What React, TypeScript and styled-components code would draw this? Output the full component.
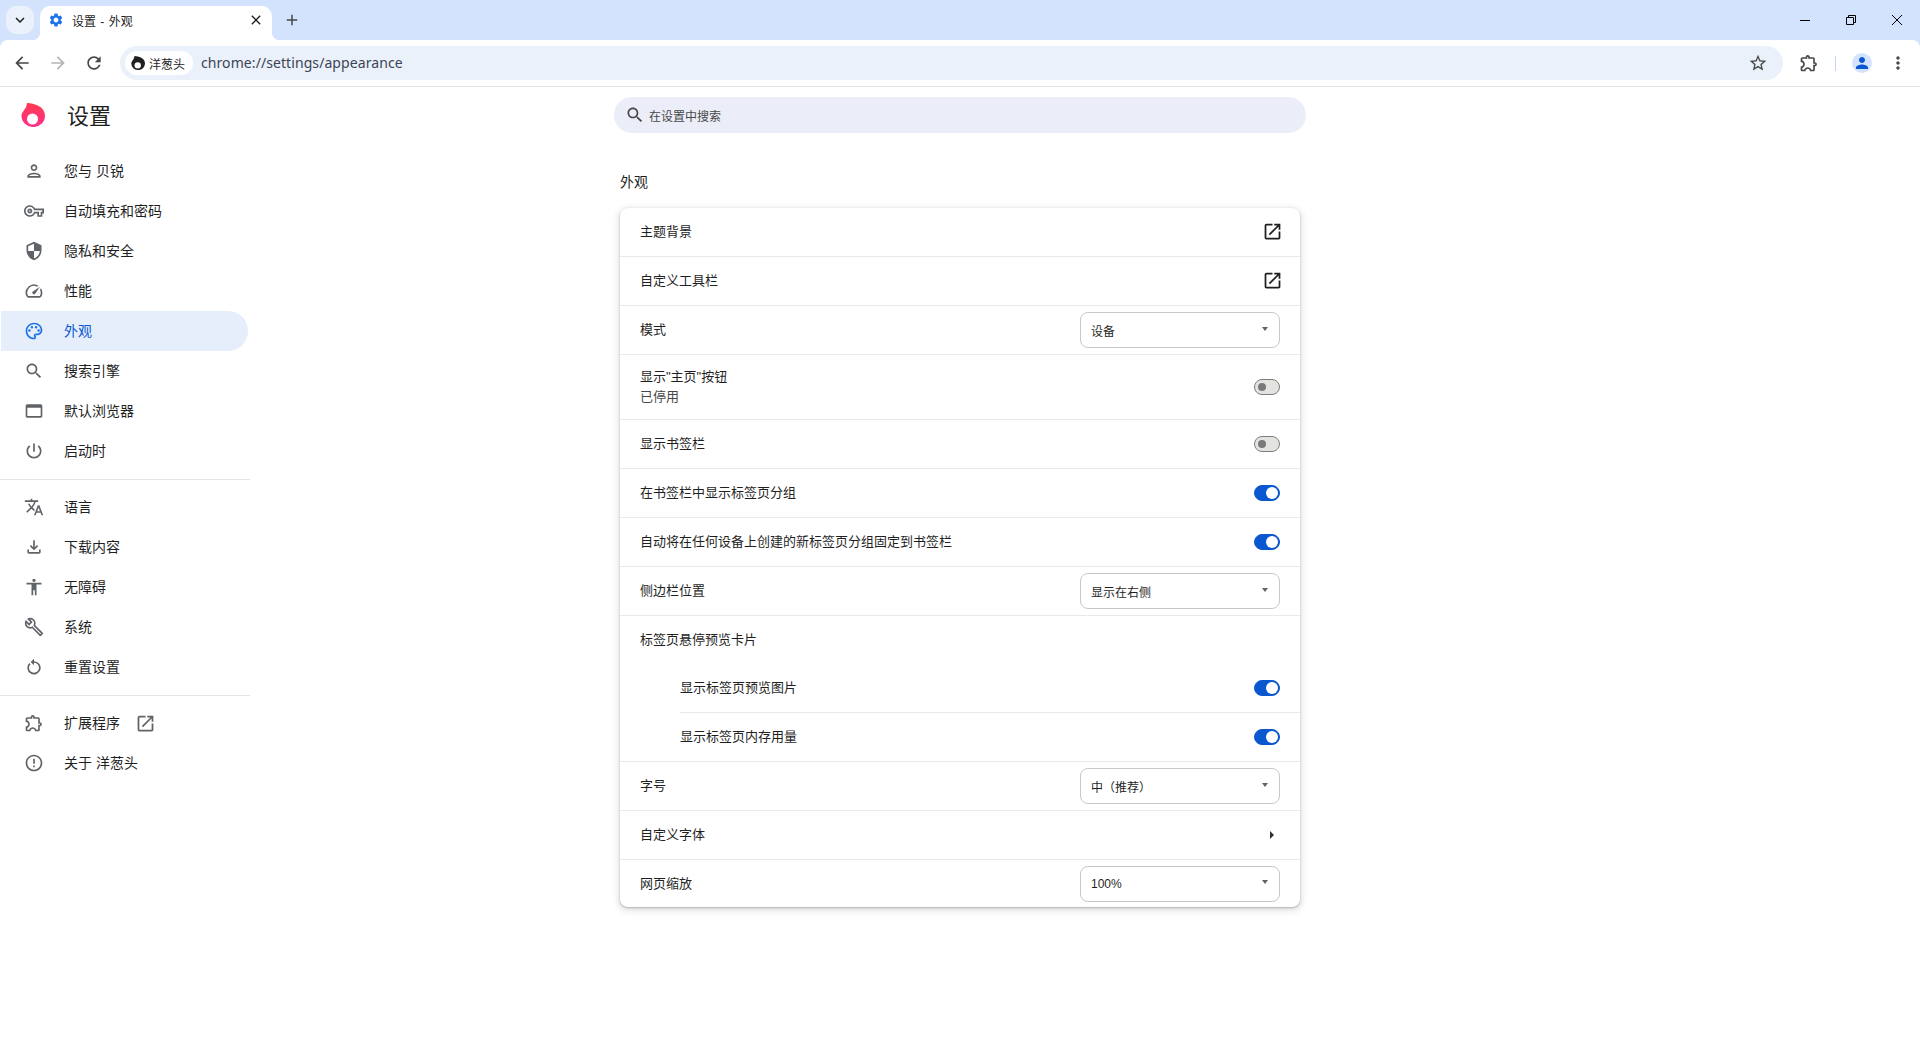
import React from "react";
import styled, { createGlobalStyle } from "styled-components";

const FONT = `"Liberation Sans", "Noto Sans CJK SC", sans-serif`;

const paths = {
  person: "M12 6c1.1 0 2 .9 2 2s-.9 2-2 2-2-.9-2-2 .9-2 2-2m0 10c2.7 0 5.8 1.29 6 2H6c.23-.72 3.31-2 6-2m0-12C9.79 4 8 5.79 8 8s1.79 4 4 4 4-1.79 4-4-1.79-4-4-4zm0 10c-2.67 0-8 1.34-8 4v2h16v-2c0-2.66-5.33-4-8-4z",
  key: "M22 19h-6v-4h-2.68c-1.14 2.42-3.6 4-6.32 4-3.86 0-7-3.14-7-7s3.14-7 7-7c2.72 0 5.17 1.58 6.32 4H24v6h-2v4zm-4-2h2v-4h2v-2H11.94l-.23-.67C11.01 8.34 9.11 7 7 7c-2.76 0-5 2.24-5 5s2.24 5 5 5c2.11 0 4.01-1.34 4.71-3.33l.23-.67H18v4zM7 15c-1.65 0-3-1.35-3-3s1.35-3 3-3 3 1.35 3 3-1.35 3-3 3zm0-4c-.55 0-1 .45-1 1s.45 1 1 1 1-.45 1-1-.45-1-1-1z",
  shield: "M12 1L3 5v6c0 5.55 3.84 10.74 9 12 5.16-1.26 9-6.45 9-12V5l-9-4zm0 10.99h7c-.53 4.12-3.28 7.79-7 8.94V12H5V6.3l7-3.11v8.8z",
  speed: "M20.38 8.57l-1.23 1.85a8 8 0 0 1-.22 7.58H5.07A8 8 0 0 1 15.58 6.85l1.85-1.23A10 10 0 0 0 3.35 19a2 2 0 0 0 1.72 1h13.85a2 2 0 0 0 1.74-1 10 10 0 0 0-.27-10.44zm-9.79 6.84a2 2 0 0 0 2.83 0l5.66-8.49-8.49 5.66a2 2 0 0 0 0 2.83z",
  palette: "M12 22C6.49 22 2 17.51 2 12S6.49 2 12 2s10 4.04 10 9c0 3.31-2.69 6-6 6h-1.77c-.28 0-.5.22-.5.5 0 .12.05.23.13.33.41.47.64 1.06.64 1.67 0 1.38-1.12 2.5-2.5 2.5zm0-18c-4.41 0-8 3.59-8 8s3.59 8 8 8c.28 0 .5-.22.5-.5 0-.16-.08-.28-.14-.35-.41-.46-.63-1.05-.63-1.65 0-1.38 1.12-2.5 2.5-2.5H16c2.21 0 4-1.79 4-4 0-3.86-3.59-7-8-7zM6.5 10a1.5 1.5 0 1 1 0 3 1.5 1.5 0 0 1 0-3zm3-4a1.5 1.5 0 1 1 0 3 1.5 1.5 0 0 1 0-3zm5 0a1.5 1.5 0 1 1 0 3 1.5 1.5 0 0 1 0-3zm3 4a1.5 1.5 0 1 1 0 3 1.5 1.5 0 0 1 0-3z",
  search: "M15.5 14h-.79l-.28-.27C15.41 12.59 16 11.11 16 9.5 16 5.91 13.09 3 9.5 3S3 5.91 3 9.5 5.91 16 9.5 16c1.61 0 3.09-.59 4.23-1.57l.27.28v.79l5 4.99L20.49 19l-4.99-5zm-6 0C7.01 14 5 11.99 5 9.5S7.01 5 9.5 5 14 7.01 14 9.5 11.99 14 9.5 14z",
  browser: "M20 4H4c-1.11 0-2 .9-2 2v12c0 1.1.89 2 2 2h16c1.1 0 2-.9 2-2V6c0-1.1-.89-2-2-2zm0 14H4V8h16v10z",
  power: "M13 3h-2v10h2V3zm4.83 2.17l-1.42 1.42C17.99 7.86 19 9.81 19 12c0 3.87-3.13 7-7 7s-7-3.13-7-7c0-2.19 1.01-4.14 2.58-5.42L6.17 5.17C4.23 6.82 3 9.26 3 12c0 4.97 4.03 9 9 9s9-4.03 9-9c0-2.74-1.23-5.18-3.17-6.83z",
  translate: "M12.87 15.07l-2.54-2.51.03-.03c1.74-1.94 2.98-4.17 3.71-6.53H17V4h-7V2H8v2H1v1.99h11.17C11.5 7.92 10.44 9.75 9 11.35 8.07 10.32 7.3 9.19 6.69 8h-2c.73 1.63 1.73 3.17 2.98 4.56l-5.09 5.02L4 19l5-5 3.11 3.11.76-2.04zM18.5 10h-2L12 22h2l1.12-3h4.75L21 22h2l-4.5-12zm-2.62 7l1.62-4.33L19.12 17h-3.24z",
  download: "M18 15v3H6v-3H4v3c0 1.1.9 2 2 2h12c1.1 0 2-.9 2-2v-3h-2zm-1-4l-1.41-1.41L13 12.17V4h-2v8.17L8.41 9.59 7 11l5 5 5-5z",
  accessibility: "M12 2c1.1 0 2 .9 2 2s-.9 2-2 2-2-.9-2-2 .9-2 2-2zm9 7h-6v13h-2v-6h-2v6H9V9H3V7h18v2z",
  wrench: "M22.61 18.99l-9.08-9.08c.93-2.34.45-5.1-1.44-7C9.79.61 6.21.4 3.66 2.26L7.5 6.11 6.08 7.52 2.25 3.69C.39 6.23.6 9.82 2.9 12.11c1.86 1.86 4.57 2.35 6.89 1.48l9.11 9.11c.39.39 1.02.39 1.41 0l2.3-2.3c.4-.38.4-1.01 0-1.41zm-3 1.6l-9.46-9.46c-.61.45-1.29.72-2 .82-1.36.2-2.79-.21-3.83-1.25C3.37 9.76 2.93 8.5 3 7.26l3.09 3.09 4.24-4.24-3.09-3.09c1.24-.07 2.49.37 3.44 1.31 1.08 1.08 1.49 2.57 1.24 3.96-.12.71-.42 1.37-.88 1.96l9.45 9.45-.88.88z",
  restore: "M12 5V2L8 6l4 4V7a6 6 0 1 1-6 6 6.1 6.1 0 0 1 1.76-4.24L6.34 7.34A8 8 0 1 0 12 5z",
  extension: "M10.5 4.5c.28 0 .5.22.5.5v2h6v6h2c.28 0 .5.22.5.5s-.22.5-.5.5h-2v6h-2.12c-.68-1.75-2.39-3-4.38-3s-3.7 1.25-4.38 3H4v-2.12c1.75-.68 3-2.39 3-4.38 0-1.99-1.24-3.7-2.99-4.38L4 7h6V5c0-.28.22-.5.5-.5m0-2C9.12 2.5 8 3.62 8 5H4c-1.1 0-1.99.9-1.99 2v3.8h.29c1.49 0 2.7 1.21 2.7 2.7s-1.21 2.7-2.7 2.7H2V20c0 1.1.9 2 2 2h3.8v-.3c0-1.49 1.21-2.7 2.7-2.7s2.7 1.21 2.7 2.7v.3H17c1.1 0 2-.9 2-2v-4c1.38 0 2.5-1.12 2.5-2.5S20.38 11 19 11V7c0-1.1-.9-2-2-2h-4c0-1.38-1.12-2.5-2.5-2.5z",
  info: "M11 15h2v2h-2zm0-8h2v6h-2zm.99-5C6.47 2 2 6.48 2 12s4.47 10 9.99 10C17.52 22 22 17.52 22 12S17.52 2 11.99 2zM12 20c-4.42 0-8-3.58-8-8s3.58-8 8-8 8 3.58 8 8-3.58 8-8 8z",
  open: "M19 19H5V5h7V3H5a2 2 0 0 0-2 2v14a2 2 0 0 0 2 2h14c1.1 0 2-.9 2-2v-7h-2v7zM14 3v2h3.59l-9.83 9.83 1.41 1.41L19 6.41V10h2V3h-7z",
  back: "M20 11H7.83l5.59-5.59L12 4l-8 8 8 8 1.41-1.41L7.83 13H20v-2z",
  forward: "M4 11h12.17l-5.59-5.59L12 4l8 8-8 8-1.41-1.41L16.17 13H4v-2z",
  reload: "M17.65 6.35C16.2 4.9 14.21 4 12 4c-4.42 0-7.99 3.58-7.99 8s3.57 8 7.99 8c3.73 0 6.84-2.55 7.73-6h-2.08c-.82 2.33-3.04 4-5.65 4-3.31 0-6-2.69-6-6s2.69-6 6-6c1.66 0 3.14.69 4.22 1.78L13 11h7V4l-2.35 2.35z",
  star: "M22 9.24l-7.19-.62L12 2 9.19 8.63 2 9.24l5.46 4.73L5.82 21 12 17.27 18.18 21l-1.63-7.03L22 9.24zM12 15.4l-3.76 2.27 1-4.28-3.32-2.88 4.38-.38L12 6.1l1.71 4.04 4.38.38-3.32 2.88 1 4.28L12 15.4z",
  gear: "M19.14 12.94c.04-.3.06-.61.06-.94 0-.32-.02-.64-.07-.94l2.03-1.58c.18-.14.23-.41.12-.61l-1.92-3.32c-.12-.22-.37-.29-.59-.22l-2.39.96c-.5-.38-1.03-.7-1.62-.94l-.36-2.54c-.04-.24-.24-.41-.48-.41h-3.84c-.24 0-.43.17-.47.41l-.36 2.54c-.59.24-1.13.57-1.62.94l-2.39-.96c-.22-.08-.47 0-.59.22L2.74 8.87c-.12.21-.08.47.12.61l2.03 1.58c-.05.3-.09.63-.09.94s.02.64.07.94l-2.03 1.58c-.18.14-.23.41-.12.61l1.92 3.32c.12.22.37.29.59.22l2.39-.96c.5.38 1.03.7 1.62.94l.36 2.54c.05.24.24.41.48.41h3.84c.24 0 .44-.17.47-.41l.36-2.54c.59-.24 1.13-.56 1.62-.94l2.39.96c.22.08.47 0 .59-.22l1.92-3.32c.12-.22.07-.47-.12-.61l-2.01-1.58zM12 15.6c-1.98 0-3.6-1.62-3.6-3.6s1.62-3.6 3.6-3.6 3.6 1.62 3.6 3.6-1.62 3.6-3.6 3.6z",
  avatar: "M12 12c2.21 0 4-1.79 4-4s-1.79-4-4-4-4 1.79-4 4 1.79 4 4 4zm0 2c-2.67 0-8 1.34-8 4v2h16v-2c0-2.66-5.33-4-8-4z",
  chevron: "M7.41 8.59L12 13.17l4.59-4.58L18 10l-6 6-6-6z",
  close: "M19 6.41L17.59 5 12 10.59 6.41 5 5 6.41 10.59 12 5 17.59 6.41 19 12 13.41 17.59 19 19 17.59 13.41 12z",
  plus: "M19 13h-6v6h-2v-6H5v-2h6V5h2v6h6v2z",
  dots: "M12 8c1.1 0 2-.9 2-2s-.9-2-2-2-2 .9-2 2 .9 2 2 2zm0 2c-1.1 0-2 .9-2 2s.9 2 2 2 2-.9 2-2-.9-2-2-2zm0 6c-1.1 0-2 .9-2 2s.9 2 2 2 2-.9 2-2-.9-2-2-2z",
};

type IconName = keyof typeof paths;

const Svg = styled.svg<{ $color: string }>`
  fill: ${(p) => p.$color};
  flex: none;
  display: block;
`;

function Icon({ name, size = 20, color = "#5f6368" }: { name: IconName; size?: number; color?: string }) {
  return (
    <Svg $color={color} width={size} height={size} viewBox="0 0 24 24">
      <path d={paths[name]} />
    </Svg>
  );
}

const FlameSvg = styled.svg`
  display: block;
  flex: none;
`;

function Flame({ size, dark }: { size: number; dark?: boolean }) {
  const id = dark ? "flameDark" : "flamePink";
  return (
    <FlameSvg width={size} height={size} viewBox="0 0 24 24">
      <defs>
        <linearGradient id={id} x1="0" y1="0" x2="0" y2="1">
          <stop offset="0" stopColor={dark ? "#1f1f1f" : "#ff3b4e"} />
          <stop offset="1" stopColor={dark ? "#1f1f1f" : "#ff2f8c"} />
        </linearGradient>
      </defs>
      <path
        d="M6 0C13 .5 24 3 24 13a11.7 11 0 0 1-23.5 0C.5 9 4 7 5 4 5.5 2.5 6 1 6 0z"
        fill={`url(#${id})`}
      />
      <circle cx="11.5" cy="16" r="5.5" fill="#fff" />
    </FlameSvg>
  );
}

const GlobalStyle = createGlobalStyle`
  * { box-sizing: border-box; }
  html, body { margin: 0; padding: 0; background: #fff; }
  body { font-family: ${FONT}; color: #1f1f1f; }
`;

const Page = styled.div`
  width: 1920px;
  height: 1040px;
  overflow: hidden;
  display: flex;
  flex-direction: column;
  background: #fff;
`;

const TabStrip = styled.div`
  height: 40px;
  flex: none;
  background: #d3e3fd;
  display: flex;
  align-items: flex-start;
  padding-left: 6px;
`;

const TabSearch = styled.div`
  width: 28px;
  height: 28px;
  margin-top: 6px;
  border-radius: 10px;
  background: #ebf1fb;
  display: flex;
  align-items: center;
  justify-content: center;
`;

const Tab = styled.div`
  position: relative;
  width: 232px;
  height: 34px;
  margin: 6px 0 0 6px;
  background: #fff;
  border-radius: 10px 10px 0 0;
  display: flex;
  align-items: center;
  padding: 0 8px 6px 8px;

  &::before,
  &::after {
    content: "";
    position: absolute;
    bottom: 0;
    width: 8px;
    height: 8px;
  }
  &::before {
    left: -8px;
    background: radial-gradient(circle at 0 0, transparent 8px, #fff 8.5px);
  }
  &::after {
    right: -8px;
    background: radial-gradient(circle at 100% 0, transparent 8px, #fff 8.5px);
  }
`;

const TabTitle = styled.span`
  flex: 1;
  margin-left: 8px;
  font-size: 12px;
  word-spacing: 1px;
  color: #1f1f1f;
`;

const NewTab = styled.div`
  width: 28px;
  height: 28px;
  margin: 6px 0 0 6px;
  display: flex;
  align-items: center;
  justify-content: center;
`;

const Spacer = styled.div`
  flex: 1;
`;

const WindowButton = styled.div`
  width: 46px;
  height: 40px;
  display: flex;
  align-items: center;
  justify-content: center;
`;

const ToolbarWrap = styled.div`
  background: #d3e3fd;
`;

const Toolbar = styled.div`
  height: 47px;
  background: #fff;
  border-bottom: 1px solid #e3e3e3;
  border-radius: 8px 8px 0 0;
  display: flex;
  align-items: center;
  padding: 0 8px;
  gap: 8px;
`;

const ToolButton = styled.div`
  width: 28px;
  height: 28px;
  flex: none;
  display: flex;
  align-items: center;
  justify-content: center;
`;

const AddressBar = styled.div`
  flex: 1;
  height: 34px;
  margin-left: 4px;
  margin-right: 4px;
  background: #ebf1fa;
  border-radius: 17px;
  display: flex;
  align-items: center;
  padding: 0 15px 0 5px;
`;

const SiteChip = styled.div`
  height: 24px;
  width: 68px;
  flex: none;
  background: #fff;
  border-radius: 12px;
  display: flex;
  align-items: center;
  padding-left: 6px;
  gap: 4px;
  font-size: 12px;
  color: #1f1f1f;
`;

const Url = styled.span`
  flex: 1;
  margin: -2px 0 0 8px;
  font-family: "Noto Sans", sans-serif;
  font-size: 14px;
  letter-spacing: 0.08px;
  color: #3c4454;
`;

const ToolDivider = styled.div`
  width: 1px;
  height: 15px;
  margin: 0 4px;
  flex: none;
  background: #c6d6f0;
`;

const Avatar = styled.div`
  width: 20px;
  height: 20px;
  border-radius: 50%;
  background: #d3e3fd;
  display: flex;
  align-items: center;
  justify-content: center;
`;

const Body = styled.div`
  flex: 1;
  display: grid;
  grid-template-columns: 250px 1fr 250px;
  min-height: 0;
`;

const Sidebar = styled.nav`
  display: flex;
  flex-direction: column;
`;

const Brand = styled.div`
  height: 64px;
  flex: none;
  display: flex;
  align-items: center;
  padding: 0 0 9px 21px;
  gap: 22px;
`;

const BrandTitle = styled.h1`
  margin: -1px 0 0;
  font-size: 22px;
  font-weight: 400;
  color: #1f1f1f;
`;

const NavItem = styled.div<{ $active?: boolean }>`
  height: 40px;
  width: 247px;
  margin-left: 1px;
  flex: none;
  display: flex;
  align-items: center;
  gap: 20px;
  padding-left: 23px;
  font-size: 14px;
  border-radius: 0 20px 20px 0;
  color: ${(p) => (p.$active ? "#0b57d0" : "#1f1f1f")};
  background: ${(p) => (p.$active ? "#e6eefb" : "transparent")};
`;

const NavLabel = styled.span`
  margin-top: -3px;
`;

const NavDivider = styled.hr`
  width: 250px;
  height: 1px;
  flex: none;
  margin: 8px 0 7px;
  border: 0;
  background: #e6e6e6;
`;

const NavExternal = styled.span`
  margin-left: -5px;
`;

const Main = styled.main`
  display: flex;
  flex-direction: column;
  align-items: center;
  padding-top: 10px;
`;

const SearchBox = styled.div`
  width: 692px;
  height: 36px;
  flex: none;
  background: #ebeef8;
  border-radius: 18px;
  display: flex;
  align-items: center;
  gap: 4px;
  padding-left: 11px;
  font-size: 12px;
  color: #474747;
`;

const Section = styled.section`
  width: 680px;
  margin-top: 39px;
`;

const SectionTitle = styled.h2`
  margin: 0 0 16px;
  font-size: 14px;
  line-height: 20px;
  font-weight: 400;
  color: #1f1f1f;
`;

const Card = styled.div`
  background: #fff;
  border-radius: 8px;
  box-shadow: 0 1px 2px rgba(60, 64, 67, 0.3), 0 2px 6px 2px rgba(60, 64, 67, 0.15);
`;

const Row = styled.div<{ $plain?: boolean; $tall?: boolean; $indent?: boolean }>`
  min-height: ${(p) => (p.$tall ? 65 : p.$plain ? 48 : 49)}px;
  display: flex;
  align-items: center;
  justify-content: space-between;
  margin-left: ${(p) => (p.$indent ? 60 : 0)}px;
  padding: 0 20px 0 ${(p) => (p.$indent ? 0 : 20)}px;
  border-top: ${(p) => (p.$plain ? "0" : "1px solid #e9e9e9")};
  font-size: 13px;
  color: #1f1f1f;

  &:first-child {
    min-height: 48px;
    border-top: 0;
  }
  &:last-child {
    min-height: 48px;
  }
`;

const Label = styled.span`
  margin-top: -3px;
`;

const SubLabel = styled.div`
  color: #474747;
`;

const LabelStack = styled.div`
  line-height: 20px;
`;

const Select = styled.div`
  width: 200px;
  height: 36px;
  border: 1px solid #c7c7c7;
  border-radius: 8px;
  background: #fff;
  display: flex;
  align-items: center;
  justify-content: space-between;
  padding: 0 11px 0 10px;
  font-size: 12px;
  color: #1f1f1f;
`;

const Caret = styled.span`
  width: 0;
  height: 0;
  margin-top: -3px;
  border-left: 3.5px solid transparent;
  border-right: 3.5px solid transparent;
  border-top: 4px solid #5f6368;
`;

const ArrowRight = styled.span`
  width: 0;
  height: 0;
  margin-right: 6px;
  border-top: 4px solid transparent;
  border-bottom: 4px solid transparent;
  border-left: 4px solid #303030;
`;

const OpenLink = styled.span`
  margin: -2px -3px 0 0;
`;

const Toggle = styled.span<{ $on?: boolean }>`
  position: relative;
  width: 26px;
  height: 16px;
  border-radius: 8px;
  background: ${(p) => (p.$on ? "#0b57d0" : "#e3e3e0")};
  border: 1px solid ${(p) => (p.$on ? "#0b57d0" : "#7d7d7d")};

  &::after {
    content: "";
    position: absolute;
    top: ${(p) => (p.$on ? 1 : 3)}px;
    left: ${(p) => (p.$on ? 11 : 3)}px;
    width: ${(p) => (p.$on ? 12 : 8)}px;
    height: ${(p) => (p.$on ? 12 : 8)}px;
    border-radius: 50%;
    background: ${(p) => (p.$on ? "#fff" : "#7a7a7a")};
  }
`;

const navGroups: { icon: IconName; label: string; active?: boolean; external?: boolean }[][] = [
  [
    { icon: "person", label: "您与 贝锐" },
    { icon: "key", label: "自动填充和密码" },
    { icon: "shield", label: "隐私和安全" },
    { icon: "speed", label: "性能" },
    { icon: "palette", label: "外观", active: true },
    { icon: "search", label: "搜索引擎" },
    { icon: "browser", label: "默认浏览器" },
    { icon: "power", label: "启动时" },
  ],
  [
    { icon: "translate", label: "语言" },
    { icon: "download", label: "下载内容" },
    { icon: "accessibility", label: "无障碍" },
    { icon: "wrench", label: "系统" },
    { icon: "restore", label: "重置设置" },
  ],
  [
    { icon: "extension", label: "扩展程序", external: true },
    { icon: "info", label: "关于 洋葱头" },
  ],
];

export default function App() {
  return (
    <Page>
      <GlobalStyle />
      <TabStrip>
        <TabSearch>
          <Icon name="chevron" size={18} color="#1f1f1f" />
        </TabSearch>
        <Tab>
          <Icon name="gear" size={16} color="#1a73e8" />
          <TabTitle>设置 - 外观</TabTitle>
          <Icon name="close" size={16} color="#1f1f1f" />
        </Tab>
        <NewTab>
          <Icon name="plus" size={18} color="#474747" />
        </NewTab>
        <Spacer />
        <WindowButton>
          <svg width="10" height="10" viewBox="0 0 10 10"><path d="M0 5.5h10" stroke="#000" fill="none" /></svg>
        </WindowButton>
        <WindowButton>
          <svg width="10" height="10" viewBox="0 0 10 10"><path d="M.5 2.5h7v7h-7zM2.5 2.5v-2h7v7h-2" stroke="#000" fill="none" /></svg>
        </WindowButton>
        <WindowButton>
          <svg width="10" height="10" viewBox="0 0 10 10"><path d="M0 0l10 10M10 0L0 10" stroke="#000" fill="none" /></svg>
        </WindowButton>
      </TabStrip>

      <ToolbarWrap>
        <Toolbar>
          <ToolButton><Icon name="back" color="#474747" /></ToolButton>
          <ToolButton><Icon name="forward" color="#b4b4b4" /></ToolButton>
          <ToolButton><Icon name="reload" color="#474747" /></ToolButton>
          <AddressBar>
            <SiteChip>
              <Flame size={14} dark />
              洋葱头
            </SiteChip>
            <Url>chrome://settings/appearance</Url>
            <Icon name="star" color="#474747" />
          </AddressBar>
          <ToolButton><Icon name="extension" color="#474747" /></ToolButton>
          <ToolDivider />
          <ToolButton>
            <Avatar><Icon name="avatar" size={18} color="#0b57d0" /></Avatar>
          </ToolButton>
          <ToolButton><Icon name="dots" color="#474747" /></ToolButton>
        </Toolbar>
      </ToolbarWrap>

      <Body>
        <Sidebar>
          <Brand>
            <Flame size={24} />
            <BrandTitle>设置</BrandTitle>
          </Brand>
          {navGroups.map((group, i) => (
            <React.Fragment key={i}>
              {i > 0 && <NavDivider />}
              {group.map((item) => (
                <NavItem key={item.label} $active={item.active}>
                  <Icon name={item.icon} color={item.active ? "#1a73e8" : "#5f6368"} />
                  <NavLabel>{item.label}</NavLabel>
                  {item.external && (
                    <NavExternal><Icon name="open" size={21} color="#5f6368" /></NavExternal>
                  )}
                </NavItem>
              ))}
            </React.Fragment>
          ))}
        </Sidebar>

        <Main>
          <SearchBox>
            <Icon name="search" size={20} color="#474747" />
            在设置中搜索
          </SearchBox>
          <Section>
            <SectionTitle>外观</SectionTitle>
            <Card>
              <Row><Label>主题背景</Label><OpenLink><Icon name="open" size={21} color="#1f1f1f" /></OpenLink></Row>
              <Row><Label>自定义工具栏</Label><OpenLink><Icon name="open" size={21} color="#1f1f1f" /></OpenLink></Row>
              <Row><Label>模式</Label><Select>设备<Caret /></Select></Row>
              <Row $tall>
                <LabelStack>
                  显示"主页"按钮
                  <SubLabel>已停用</SubLabel>
                </LabelStack>
                <Toggle />
              </Row>
              <Row><Label>显示书签栏</Label><Toggle /></Row>
              <Row><Label>在书签栏中显示标签页分组</Label><Toggle $on /></Row>
              <Row><Label>自动将在任何设备上创建的新标签页分组固定到书签栏</Label><Toggle $on /></Row>
              <Row><Label>侧边栏位置</Label><Select>显示在右侧<Caret /></Select></Row>
              <Row><Label>标签页悬停预览卡片</Label></Row>
              <Row $plain $indent><Label>显示标签页预览图片</Label><Toggle $on /></Row>
              <Row $indent><Label>显示标签页内存用量</Label><Toggle $on /></Row>
              <Row><Label>字号</Label><Select>中（推荐）<Caret /></Select></Row>
              <Row><Label>自定义字体</Label><ArrowRight /></Row>
              <Row><Label>网页缩放</Label><Select>100%<Caret /></Select></Row>
            </Card>
          </Section>
        </Main>
      </Body>
    </Page>
  );
}
